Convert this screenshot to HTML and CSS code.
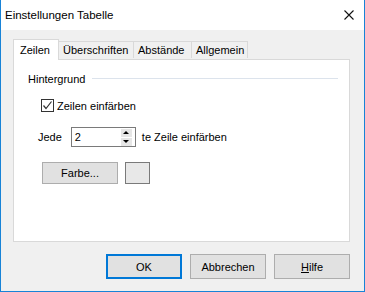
FILE: index.html
```html
<!DOCTYPE html>
<html lang="de">
<head>
    <meta charset="UTF-8">
    <title>Einstellungen Tabelle</title>
    <link rel="stylesheet" href="styles.css">
</head>
<body>
    <div class="window">
        <div class="titlebar">
            <span class="title">Einstellungen Tabelle</span>
            <svg class="close" width="10" height="10" viewBox="0 0 10 10">
                <path d="M0.5 0.5 L9.5 9.5 M9.5 0.5 L0.5 9.5" stroke="#111" stroke-width="1.1" fill="none"/>
            </svg>
        </div>
        <div class="content">
            <div class="tabs">
                <div class="tab active">Zeilen</div>
                <div class="tab">Überschriften</div>
                <div class="tab">Abstände</div>
                <div class="tab">Allgemein</div>
            </div>
            <div class="panel">
                <div class="group-head">
                    <span>Hintergrund</span>
                    <div class="group-line"></div>
                </div>
                <label class="check-row">
                    <span class="checkbox">
                        <svg width="11" height="11" viewBox="0 0 11 11">
                            <path d="M1.5 5.5 L4 8.5 L9.5 1.5" stroke="#333" stroke-width="1.2" fill="none"/>
                        </svg>
                    </span>
                    <span>Zeilen einfärben</span>
                </label>
                <div class="every-row">
                    <span>Jede</span>
                    <div class="spin">
                        <span class="spin-value">2</span>
                        <div class="spin-buttons">
                            <span class="spin-btn"><span class="arrow up"></span></span>
                            <span class="spin-btn"><span class="arrow down"></span></span>
                        </div>
                    </div>
                    <span>te Zeile einfärben</span>
                </div>
                <div class="color-row">
                    <button class="btn color-btn">Farbe...</button>
                    <span class="swatch"></span>
                </div>
            </div>
            <div class="actions">
                <button class="btn default">OK</button>
                <button class="btn">Abbrechen</button>
                <button class="btn"><u>H</u>ilfe</button>
            </div>
        </div>
    </div>
</body>
</html>
```

FILE: styles.css
```css
body {
    margin: 0;
    font-family: "Liberation Sans", Arial, sans-serif;
    font-size: 11px;
    color: #000;
    background: #f0f0f0;
}
.window {
    width: 365px;
    height: 292px;
    box-sizing: border-box;
    border: 1px solid #1883d7;
    border-top: none;
    display: flex;
    flex-direction: column;
}
.titlebar {
    height: 30px;
    background: #fff;
    display: flex;
    align-items: center;
    justify-content: space-between;
    padding: 0 10px 0 4px;
    flex-shrink: 0;
}
.title {
    font-size: 11.5px;
}
.close {
    display: block;
}
.content {
    flex: 1;
    background: #f0f0f0;
    padding: 8px 14px 0 12px;
    display: flex;
    flex-direction: column;
}
.tabs {
    display: flex;
    align-items: flex-end;
    height: 21px;
    position: relative;
    z-index: 1;
}
.tab {
    height: 17px;
    line-height: 16px;
    padding: 0 4px;
    border: 1px solid #d9d9d9;
    border-bottom: none;
    border-left: none;
    box-sizing: border-box;
    background: #f0f0f0;
    margin-bottom: 1px;
}
.tab.active {
    height: 21px;
    line-height: 20px;
    background: #fff;
    border-left: 1px solid #d9d9d9;
    padding: 0 6px;
    margin-bottom: -1px;
    width: 46px;
}
.tab:nth-child(2) {
    width: 75px;
}
.tab:nth-child(3) {
    width: 58px;
}
.tab:nth-child(4) {
    width: 56px;
}
.panel {
    height: 183px;
    box-sizing: border-box;
    background: #fff;
    border: 1px solid #d9d9d9;
    padding: 12px 11px 0 14px;
}
.group-head {
    display: flex;
    align-items: center;
    height: 14px;
}
.group-line {
    flex: 1;
    border-top: 1px solid #dce3ec;
    margin-left: 7px;
    margin-top: -2px;
}
.check-row {
    display: flex;
    align-items: center;
    margin: 12px 0 0 13px;
    gap: 3px;
    height: 15px;
}
.checkbox {
    width: 13px;
    height: 13px;
    box-sizing: border-box;
    border: 1px solid #333;
    display: flex;
    align-items: center;
    justify-content: center;
}
.checkbox svg {
    display: block;
}
.every-row {
    display: flex;
    align-items: center;
    margin: 14px 0 0 10px;
}
.spin {
    width: 65px;
    height: 20px;
    box-sizing: border-box;
    border: 1px solid #7a7a7a;
    margin: 0 6px 0 9px;
    display: flex;
    align-items: center;
    justify-content: space-between;
    padding: 0 3px 0 3px;
}
.spin-buttons {
    display: flex;
    flex-direction: column;
    gap: 1px;
}
.spin-btn {
    width: 11px;
    height: 8px;
    background: #e6e6e6;
    display: flex;
    align-items: center;
    justify-content: center;
}
.arrow {
    width: 0;
    height: 0;
    border-left: 3px solid transparent;
    border-right: 3px solid transparent;
}
.arrow.up {
    border-bottom: 3px solid #000;
}
.arrow.down {
    border-top: 3px solid #000;
}
.color-row {
    display: flex;
    align-items: center;
    margin: 15px 0 0 14px;
    gap: 7px;
}
.btn {
    font-family: inherit;
    font-size: 11px;
    color: #000;
    background: #e1e1e1;
    border: 1px solid #adadad;
    width: 76px;
    height: 25px;
    padding: 0;
    box-sizing: border-box;
}
.color-btn {
    height: 22px;
}
.swatch {
    width: 25px;
    height: 22px;
    box-sizing: border-box;
    border: 1px solid #7a7a7a;
    background: #e8e8e8;
}
.actions {
    display: flex;
    justify-content: flex-end;
    gap: 8px;
    margin-top: 12px;
}
.btn.default {
    border: 2px solid #0078d7;
}
```
